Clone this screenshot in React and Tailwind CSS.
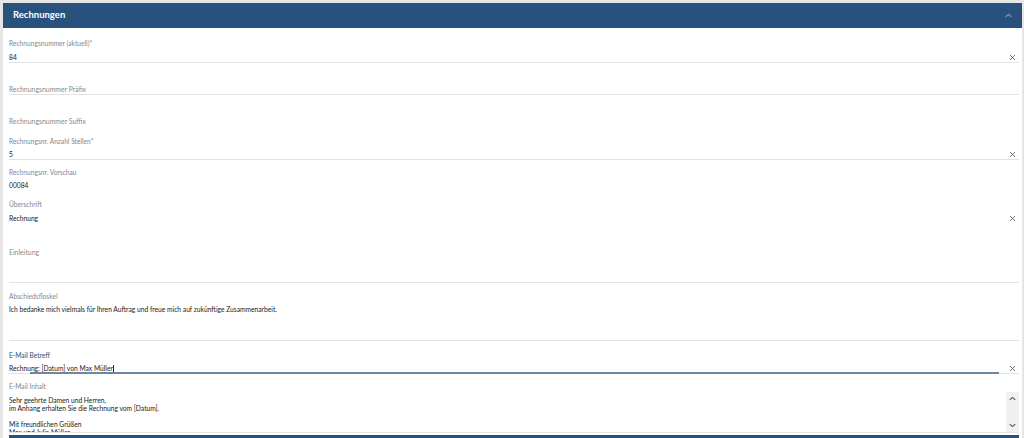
import React from 'react';

const font = { fontFamily: 'Lato, "Open Sans", sans-serif' };

function ClearIcon() {
  return (
    <svg width="7" height="7" viewBox="0 0 10 10" className="shrink-0">
      <path d="M1.5 1.5 L8.5 8.5 M8.5 1.5 L1.5 8.5" stroke="#6f6a62" strokeWidth="1.4" fill="none" />
    </svg>
  );
}

function Label({ children, blue }) {
  return (
    <div className={`h-[10px] leading-[10px] text-[6.65px] ${blue ? 'text-[#2a5380]' : 'text-[#868686]'}`}>
      {children}
    </div>
  );
}

function Field({ label, value, pt, gap, clear, line = true }) {
  return (
    <div className={`flex flex-col ${pt}`}>
      <Label>{label}</Label>
      <div className={`${gap} flex h-[11px] items-center border-b ${line ? 'border-[#e2e2e2]' : 'border-transparent'}`}>
        <span className="flex-1 text-[6.7px] leading-[10px] text-[#1a1a1a]">{value}</span>
        {clear && <span className="mr-[3px]"><ClearIcon /></span>}
      </div>
    </div>
  );
}

function Placeholder({ text, pt, line = true }) {
  return (
    <div className={`flex flex-col ${pt}`}>
      <div className={`flex h-[11px] items-center border-b ${line ? 'border-[#e2e2e2]' : 'border-transparent'}`}>
        <span className="text-[6.9px] leading-[10px] text-[#8a8a8a]">{text}</span>
      </div>
    </div>
  );
}

export default function App() {
  return (
    <div className="h-[438px] w-[1024px] overflow-hidden bg-[#e6e6e6] pl-[3px] pr-[2px] pt-[3px]" style={font}>
      <div className="flex h-[25px] items-center justify-between bg-[#28527d] pl-[10px] pr-[10px]">
        <span className="text-[9.5px] font-bold text-white">Rechnungen</span>
        <svg width="7" height="5" viewBox="0 0 10 6">
          <path d="M1 5 L5 1.5 L9 5" stroke="#8fa6bf" strokeWidth="1.6" fill="none" />
        </svg>
      </div>
      <div className="flex h-[410px] flex-col bg-white pl-[6px] pr-[3px]">
        <Field label="Rechnungsnummer (aktuell)*" value="84" pt="pt-[10px]" gap="mt-[4px]" clear />
        <Placeholder text="Rechnungsnummer Präfix" pt="pt-[21px]" />
        <Placeholder text="Rechnungsnummer Suffix" pt="pt-[21px]" line={false} />
        <Field label="Rechnungsnr. Anzahl Stellen*" value="5" pt="pt-[9px]" gap="mt-[3px]" clear />
        <Field label="Rechnungsnr. Vorschau" value="00084" pt="pt-[7px]" gap="mt-[3px]" line={false} />
        <Field label="Überschrift" value="Rechnung" pt="pt-[8px]" gap="mt-[4px]" clear line={false} />

        <div className="flex flex-col pt-[23px]">
          <div className="h-[36px] border-b border-[#e2e2e2] text-[6.9px] leading-[10px] text-[#8a8a8a]">Einleitung</div>
        </div>

        <div className="flex flex-col pt-[8px]">
          <Label>Abschiedsfloskel</Label>
          <div className="mt-[3px] h-[37px] border-b border-[#e2e2e2] text-[6.7px] leading-[10px] text-[#1a1a1a]">
            Ich bedanke mich vielmals für Ihren Auftrag und freue mich auf zukünftige Zusammenarbeit.
          </div>
        </div>

        <div className="flex flex-col pt-[9px]">
          <Label blue>E-Mail Betreff</Label>
          <div className="relative mt-[3px] flex h-[11px] items-center border-b border-[#e2e2e2]">
            <span className="flex-1 text-[6.7px] leading-[10px] text-[#1a1a1a]">
              Rechnung: [Datum] von Max Müller<span className="ml-[0.5px] inline-block h-[8px] w-[1px] bg-[#222] align-middle" />
            </span>
            <span className="mr-[3px]"><ClearIcon /></span>
            <div className="absolute bottom-[-1px] left-[21px] right-[20px] h-[2px] bg-[#6d87a3]" />
          </div>
        </div>

        <div className="flex flex-col pt-[7px]">
          <Label>E-Mail Inhalt</Label>
          <div className="mt-[5px] flex h-[37px] border-b border-[#e2e2e2]">
            <div className="flex-1 overflow-hidden text-[6.7px] leading-[8px] text-[#1a1a1a]">
              <div>Sehr geehrte Damen und Herren,</div>
              <div>im Anhang erhalten Sie die Rechnung vom [Datum].</div>
              <div className="h-[8px]" />
              <div>Mit freundlichen Grüßen</div>
              <div>Max und Julia Müller</div>
            </div>
            <div className="mt-[-4px] flex w-[13px] flex-col items-center justify-between bg-[#f0f0f0] py-[4px]">
              <svg width="7" height="5" viewBox="0 0 10 6">
                <path d="M1 5 L5 1.5 L9 5" stroke="#555" strokeWidth="1.6" fill="none" />
              </svg>
              <svg width="7" height="5" viewBox="0 0 10 6">
                <path d="M1 1 L5 4.5 L9 1" stroke="#555" strokeWidth="1.6" fill="none" />
              </svg>
            </div>
          </div>
        </div>
        <div className="mt-[2px] h-[6px] bg-[#28527d]" />
      </div>
    </div>
  );
}
